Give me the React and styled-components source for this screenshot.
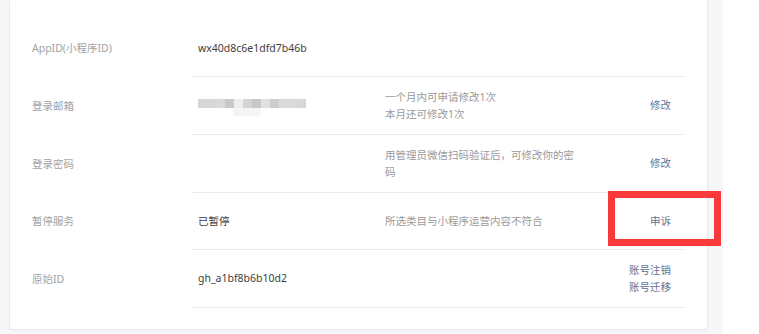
import React from "react";
import styled, { createGlobalStyle } from "styled-components";

const GlobalStyle = createGlobalStyle`
  html, body { margin: 0; padding: 0; background: #ffffff; }
  body {
    font-family: "Noto Sans", "Noto Sans CJK SC", sans-serif;
    font-size: 10.5px;
    line-height: 16.5px;
    -webkit-font-smoothing: antialiased;
  }
`;

const Page = styled.div`
  position: relative;
  width: 723px;
  height: 334px;
  box-sizing: border-box;
  background: #f6f7f9;
  padding: 0 15px 6px 9px;
`;

const Card = styled.div`
  background: #ffffff;
  border: 1px solid #e9eaed;
  border-top: 0;
  border-radius: 0 0 3px 3px;
  box-shadow: 0 1px 2px rgba(0, 0, 0, 0.03);
  padding: 20px 22px 21px 22px;
`;

const Row = styled.div`
  display: flex;
  align-items: stretch;
`;

const Label = styled.div`
  flex: none;
  width: 160px;
  display: flex;
  align-items: center;
  color: #a2a2a2;
`;

const Body = styled.div`
  flex: 1;
  display: grid;
  grid-template-columns: 187px 194px 1fr;
  align-items: center;
  min-height: 32px;
  padding: 12px 14px 12px 6px;
  border-bottom: 1px solid #ececec;
`;

const Value = styled.div`
  color: #404040;
`;

const Desc = styled.div`
  color: #9a9a9a;
`;

const Actions = styled.div`
  justify-self: end;
  display: flex;
  flex-direction: column;
  align-items: flex-end;
`;

const Link = styled.a`
  color: #5f7298;
  text-decoration: none;
  cursor: pointer;
`;

const Mosaic = styled.div`
  display: flex;
  flex-direction: column;
  padding-top: 3px;
`;

const MosaicRow = styled.div`
  display: flex;
  margin-left: ${(p) => p.$offset || 0}px;
`;

const Tile = styled.span`
  display: block;
  width: 9px;
  height: ${(p) => p.$h}px;
  background: ${(p) => p.$c};
`;

const Highlight = styled.div`
  position: absolute;
  left: 608px;
  top: 191px;
  width: 113px;
  height: 55px;
  box-sizing: border-box;
  border: 7px solid #f83a3c;
  pointer-events: none;
`;

const topTiles = [
  "#d6d6d6", "#d6d6d6", "#d9d9d9", "#c9c9c9", "#eeeeee", "#d4d4d4",
  "#c8c8c8", "#e1e1e1", "#cdcdcd", "#dadada", "#dadada", "#d7d7d7",
];
const bottomTiles = ["#f3f3f3", "#f5f5f5", "#f5f5f5"];

function BlurredEmail() {
  return (
    <Mosaic aria-label="已隐藏邮箱">
      <MosaicRow>
        {topTiles.map((c, i) => (
          <Tile key={i} $c={c} $h={9} />
        ))}
      </MosaicRow>
      <MosaicRow $offset={35}>
        {bottomTiles.map((c, i) => (
          <Tile key={i} $c={c} $h={8} />
        ))}
      </MosaicRow>
    </Mosaic>
  );
}

const rows = [
  { label: "AppID(小程序ID)", value: "wx40d8c6e1dfd7b46b" },
  {
    label: "登录邮箱",
    value: <BlurredEmail />,
    desc: (
      <>
        一个月内可申请修改1次
        <br />
        本月还可修改1次
      </>
    ),
    actions: ["修改"],
  },
  {
    label: "登录密码",
    desc: "用管理员微信扫码验证后，可修改你的密码",
    actions: ["修改"],
  },
  {
    label: "暂停服务",
    value: "已暂停",
    desc: "所选类目与小程序运营内容不符合",
    actions: ["申诉"],
  },
  {
    label: "原始ID",
    value: "gh_a1bf8b6b10d2",
    actions: ["账号注销", "账号迁移"],
  },
];

export default function App() {
  return (
    <>
      <GlobalStyle />
      <Page>
        <Card>
          {rows.map((r) => (
            <Row key={r.label}>
              <Label>{r.label}</Label>
              <Body>
                <Value>{r.value}</Value>
                <Desc>{r.desc}</Desc>
                <Actions>
                  {(r.actions || []).map((a) => (
                    <Link key={a}>{a}</Link>
                  ))}
                </Actions>
              </Body>
            </Row>
          ))}
        </Card>
        <Highlight />
      </Page>
    </>
  );
}
